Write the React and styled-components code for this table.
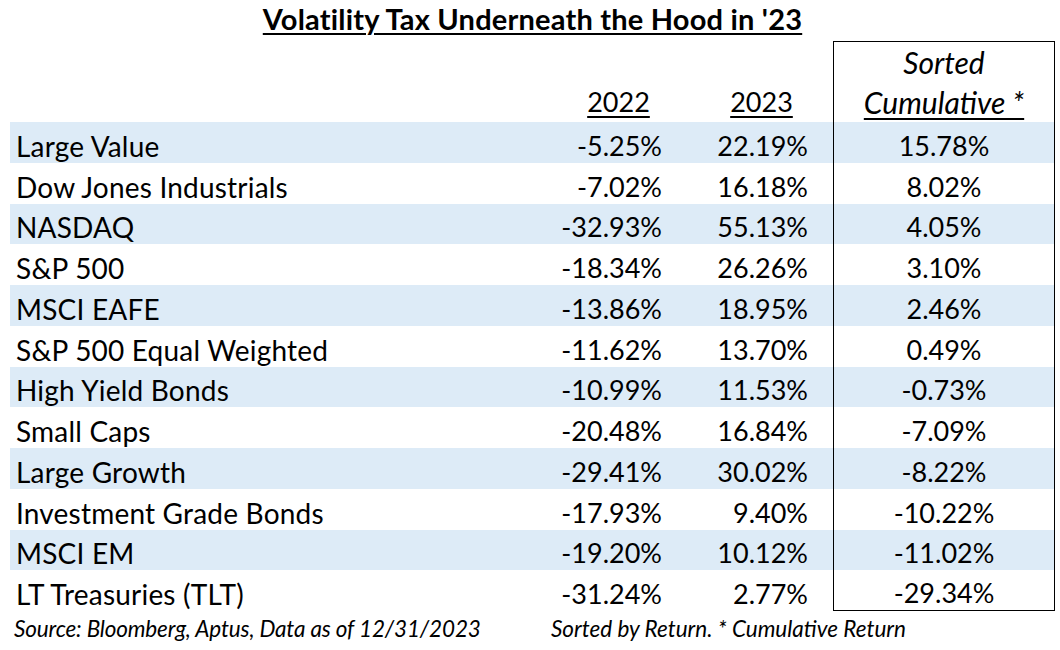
import React from "react";
import styled, { createGlobalStyle } from "styled-components";

const GlobalStyle = createGlobalStyle`
  html, body {
    margin: 0;
    padding: 0;
    background: #ffffff;
  }
  body {
    font-family: Lato, "Open Sans", "Liberation Sans", sans-serif;
    color: #000000;
  }
`;

const rows = [
  ["Large Value", "-5.25%", "22.19%", "15.78%"],
  ["Dow Jones Industrials", "-7.02%", "16.18%", "8.02%"],
  ["NASDAQ", "-32.93%", "55.13%", "4.05%"],
  ["S&P 500", "-18.34%", "26.26%", "3.10%"],
  ["MSCI EAFE", "-13.86%", "18.95%", "2.46%"],
  ["S&P 500 Equal Weighted", "-11.62%", "13.70%", "0.49%"],
  ["High Yield Bonds", "-10.99%", "11.53%", "-0.73%"],
  ["Small Caps", "-20.48%", "16.84%", "-7.09%"],
  ["Large Growth", "-29.41%", "30.02%", "-8.22%"],
  ["Investment Grade Bonds", "-17.93%", "9.40%", "-10.22%"],
  ["MSCI EM", "-19.20%", "10.12%", "-11.02%"],
  ["LT Treasuries (TLT)", "-31.24%", "2.77%", "-29.34%"]
];

const Page = styled.div`
  width: 1060px;
  height: 650px;
  overflow: hidden;
  padding: 0 5px 0 10px;
  box-sizing: border-box;
`;

const Title = styled.h1`
  margin: 0;
  width: 1045px;
  height: 41px;
  text-align: center;
  font-size: 29px;
  letter-spacing: 0.2px;
  font-weight: 700;
  line-height: 38px;
  text-decoration: underline;
  text-decoration-thickness: 2px;
  text-underline-offset: 3px;
`;

const Table = styled.div`
  display: flex;
  flex-direction: column;
  width: 1045px;
`;

const Row = styled.div`
  display: grid;
  grid-template-columns: 565px 95px 163px 222px;
  height: ${p => (p.$header ? "40.5px" : "40.75px")};
  background: ${p => (p.$shaded ? "#ddebf7" : "transparent")};
  font-size: 27px;
  line-height: 32px;
`;

const Cell = styled.div`
  display: flex;
  align-items: flex-end;
  padding-bottom: ${p => (p.$header ? "4px" : "1px")};
  box-sizing: border-box;
  white-space: nowrap;
`;

const Label = styled(Cell)`
  padding-left: 6px;
  font-size: 28px;
  letter-spacing: 0.2px;
`;

const Year22 = styled(Cell)`
  justify-content: ${p => (p.$header ? "center" : "flex-end")};
  padding-right: 8px;
`;

const Year23 = styled(Cell)`
  justify-content: ${p => (p.$header ? "center" : "flex-end")};
  padding-left: 45px;
  padding-right: 25px;
`;

const Sorted = styled(Cell)`
  justify-content: center;
  border-left: 1px solid #000;
  border-right: 1px solid #000;
  border-top: ${p => (p.$first ? "1px solid #000" : "none")};
  border-bottom: ${p => (p.$last ? "1px solid #000" : "none")};
  font-style: ${p => (p.$italic ? "italic" : "normal")};
  font-size: ${p => (p.$italic ? "30px" : "27px")};
`;

const Under = styled.span`
  text-decoration: underline;
  text-decoration-thickness: 2px;
  text-underline-offset: 4px;
`;

const Notes = styled.div`
  display: flex;
  font-size: 22.5px;
  font-style: italic;
  padding-top: 4px;
`;

const Note = styled.span`
  width: ${p => p.$width};
  padding-left: ${p => p.$indent};
  letter-spacing: ${p => p.$tight || "0"};
  white-space: nowrap;
`;

export default function App() {
  return (
    <Page>
      <GlobalStyle />
      <Title>Volatility Tax Underneath the Hood in '23</Title>
      <Table>
        <Row $header>
          <Label $header />
          <Year22 $header />
          <Year23 $header />
          <Sorted $header $first $italic>
            Sorted
          </Sorted>
        </Row>
        <Row $header>
          <Label $header />
          <Year22 $header>
            <Under>2022</Under>
          </Year22>
          <Year23 $header>
            <Under>2023</Under>
          </Year23>
          <Sorted $header $italic>
            <Under>Cumulative *</Under>
          </Sorted>
        </Row>
        {rows.map(([name, a, b, c], i) => (
          <Row key={name} $shaded={i % 2 === 0}>
            <Label>{name}</Label>
            <Year22>{a}</Year22>
            <Year23>{b}</Year23>
            <Sorted $last={i === rows.length - 1}>{c}</Sorted>
          </Row>
        ))}
      </Table>
      <Notes>
        <Note $width="537px" $indent="4px" $tight="-0.15px">
          Source: Bloomberg, Aptus, Data as of 12/31/2023
        </Note>
        <Note>Sorted by Return. * Cumulative Return</Note>
      </Notes>
    </Page>
  );
}
